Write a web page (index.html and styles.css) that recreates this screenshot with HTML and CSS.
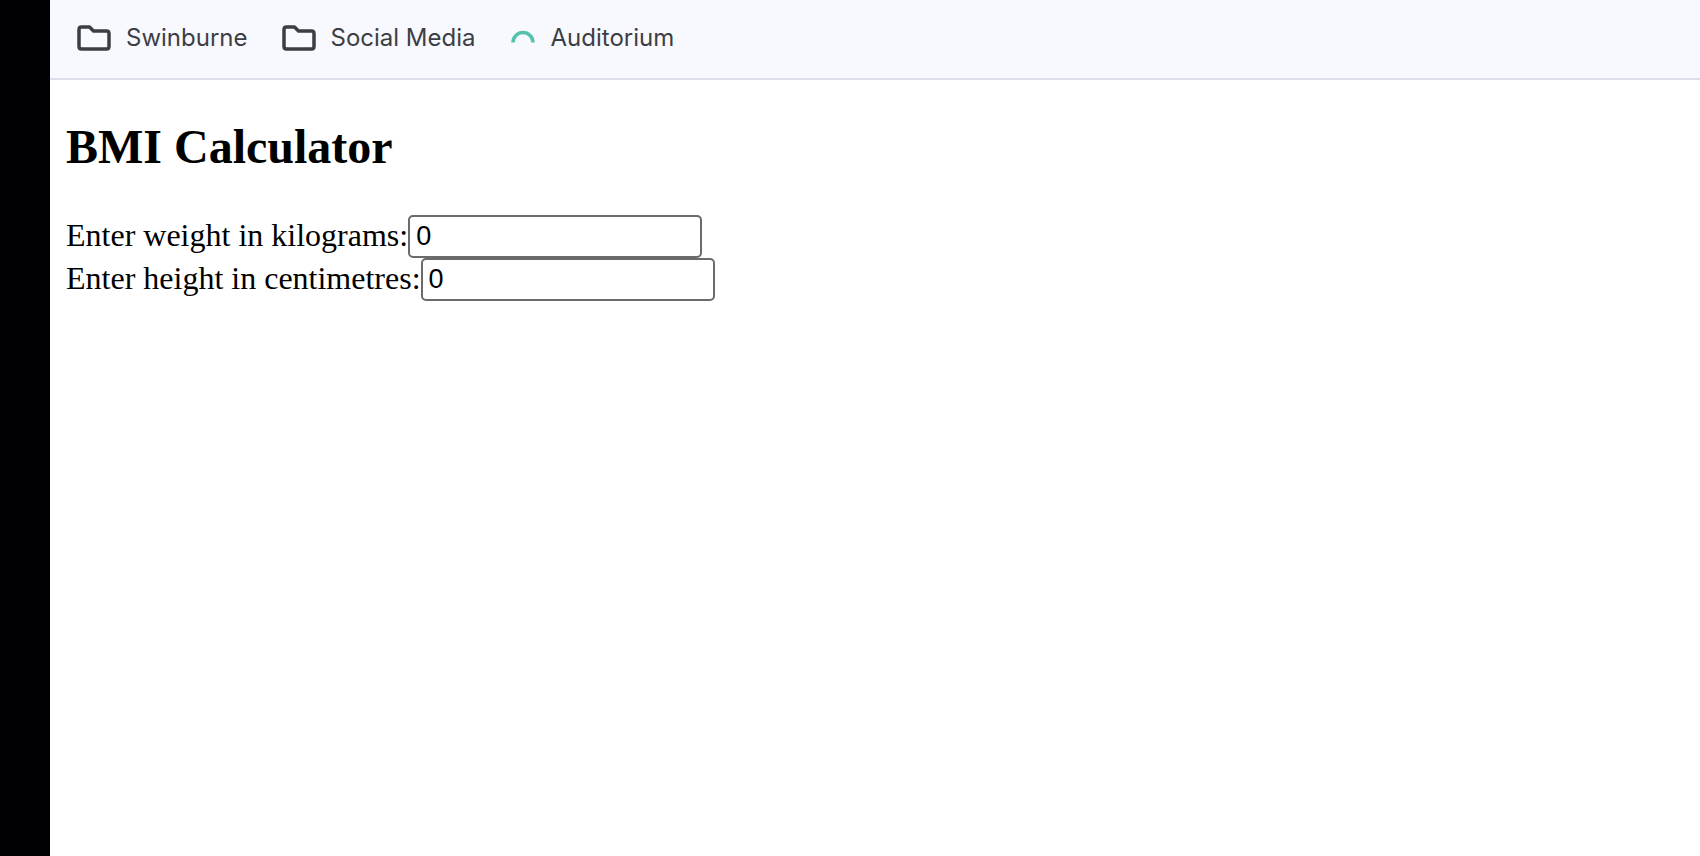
FILE: index.html
```html
<!DOCTYPE html>
<html lang="en">
<head>
<meta charset="utf-8">
<title>BMI Calculator</title>
<link rel="stylesheet" href="styles.css">
</head>
<body>
<div class="window">
  <nav class="bookmarks" aria-label="Bookmarks">
    <a class="bookmark" href="#swinburne">
      <svg class="icon" viewBox="0 0 34 26" aria-hidden="true"><path class="folder" d="M4.5 2H12.5L16.500 6H29.500Q32 6 32 8.500V21.500Q32 24 29.500 24H4.500Q2 24 2 21.500V4.500Q2 2 4.500 2Z"/></svg>
      <span>Swinburne</span>
    </a>
    <a class="bookmark" href="#social-media">
      <svg class="icon" viewBox="0 0 34 26" aria-hidden="true"><path class="folder" d="M4.500 2H12.500L16.500 6H29.500Q32 6 32 8.500V21.500Q32 24 29.500 24H4.500Q2 24 2 21.500V4.500Q2 2 4.500 2Z"/></svg>
      <span>Social Media</span>
    </a>
    <a class="bookmark" href="#auditorium">
      <svg class="icon icon-square" viewBox="0 0 26 26" aria-hidden="true"><path class="arc" d="M3 17.500A10 10 0 0 1 23 17.500"/></svg>
      <span>Auditorium</span>
    </a>
  </nav>
  <main class="page">
    <h2 class="title">BMI Calculator</h2>
    <form class="form">
      <div class="field"><label class="label" for="weight">Enter weight in kilograms:</label><input class="entry" id="weight" type="text" inputmode="decimal" value="0"></div>
      <div class="field"><label class="label" for="height">Enter height in centimetres:</label><input class="entry" id="height" type="text" inputmode="decimal" value="0"></div>
    </form>
  </main>
</div>
</body>
</html>
```

FILE: styles.css
```css
* {
  box-sizing: border-box;
}

body {
  margin: 0;
  background: #000005;
  color: #000;
  font-family: "Liberation Serif", "Times New Roman", serif;
  font-size: 32px;
}

.window {
  display: flex;
  flex-direction: column;
  min-height: 100vh;
  margin-left: 50px;
  background: #fff;
}

.bookmarks {
  display: flex;
  align-items: center;
  gap: 34px;
  padding: 22px 27px 24px;
  background: #f8f9ff;
  border-bottom: 2px solid #dcdfe9;
}

.bookmark {
  display: flex;
  align-items: center;
  gap: 15px;
  color: #3d3e43;
  font-family: Inter, sans-serif;
  font-size: 24px;
  line-height: 32px;
  text-decoration: none;
}

.icon {
  width: 34px;
  height: 26px;
  fill: none;
}

.icon-square {
  width: 26px;
}

.folder {
  stroke: #3d3e43;
  stroke-width: 3.5;
  stroke-linejoin: round;
}

.arc {
  stroke: #55c2ac;
  stroke-width: 3.5;
}

.page {
  padding: 39px 16px 16px;
}

.title {
  margin: 0 0 41px;
  font-size: 48px;
  line-height: 55px;
}

.field {
  display: flex;
  align-items: flex-start;
}

.label {
  line-height: 41px;
}

.entry {
  width: 294px;
  height: 43px;
  padding: 2px 6px;
  border: 2px solid #6b6b6b;
  border-radius: 5px;
  background: #fff;
  color: #000;
  font-family: "Liberation Sans", Arial, sans-serif;
  font-size: 27px;
}
```
